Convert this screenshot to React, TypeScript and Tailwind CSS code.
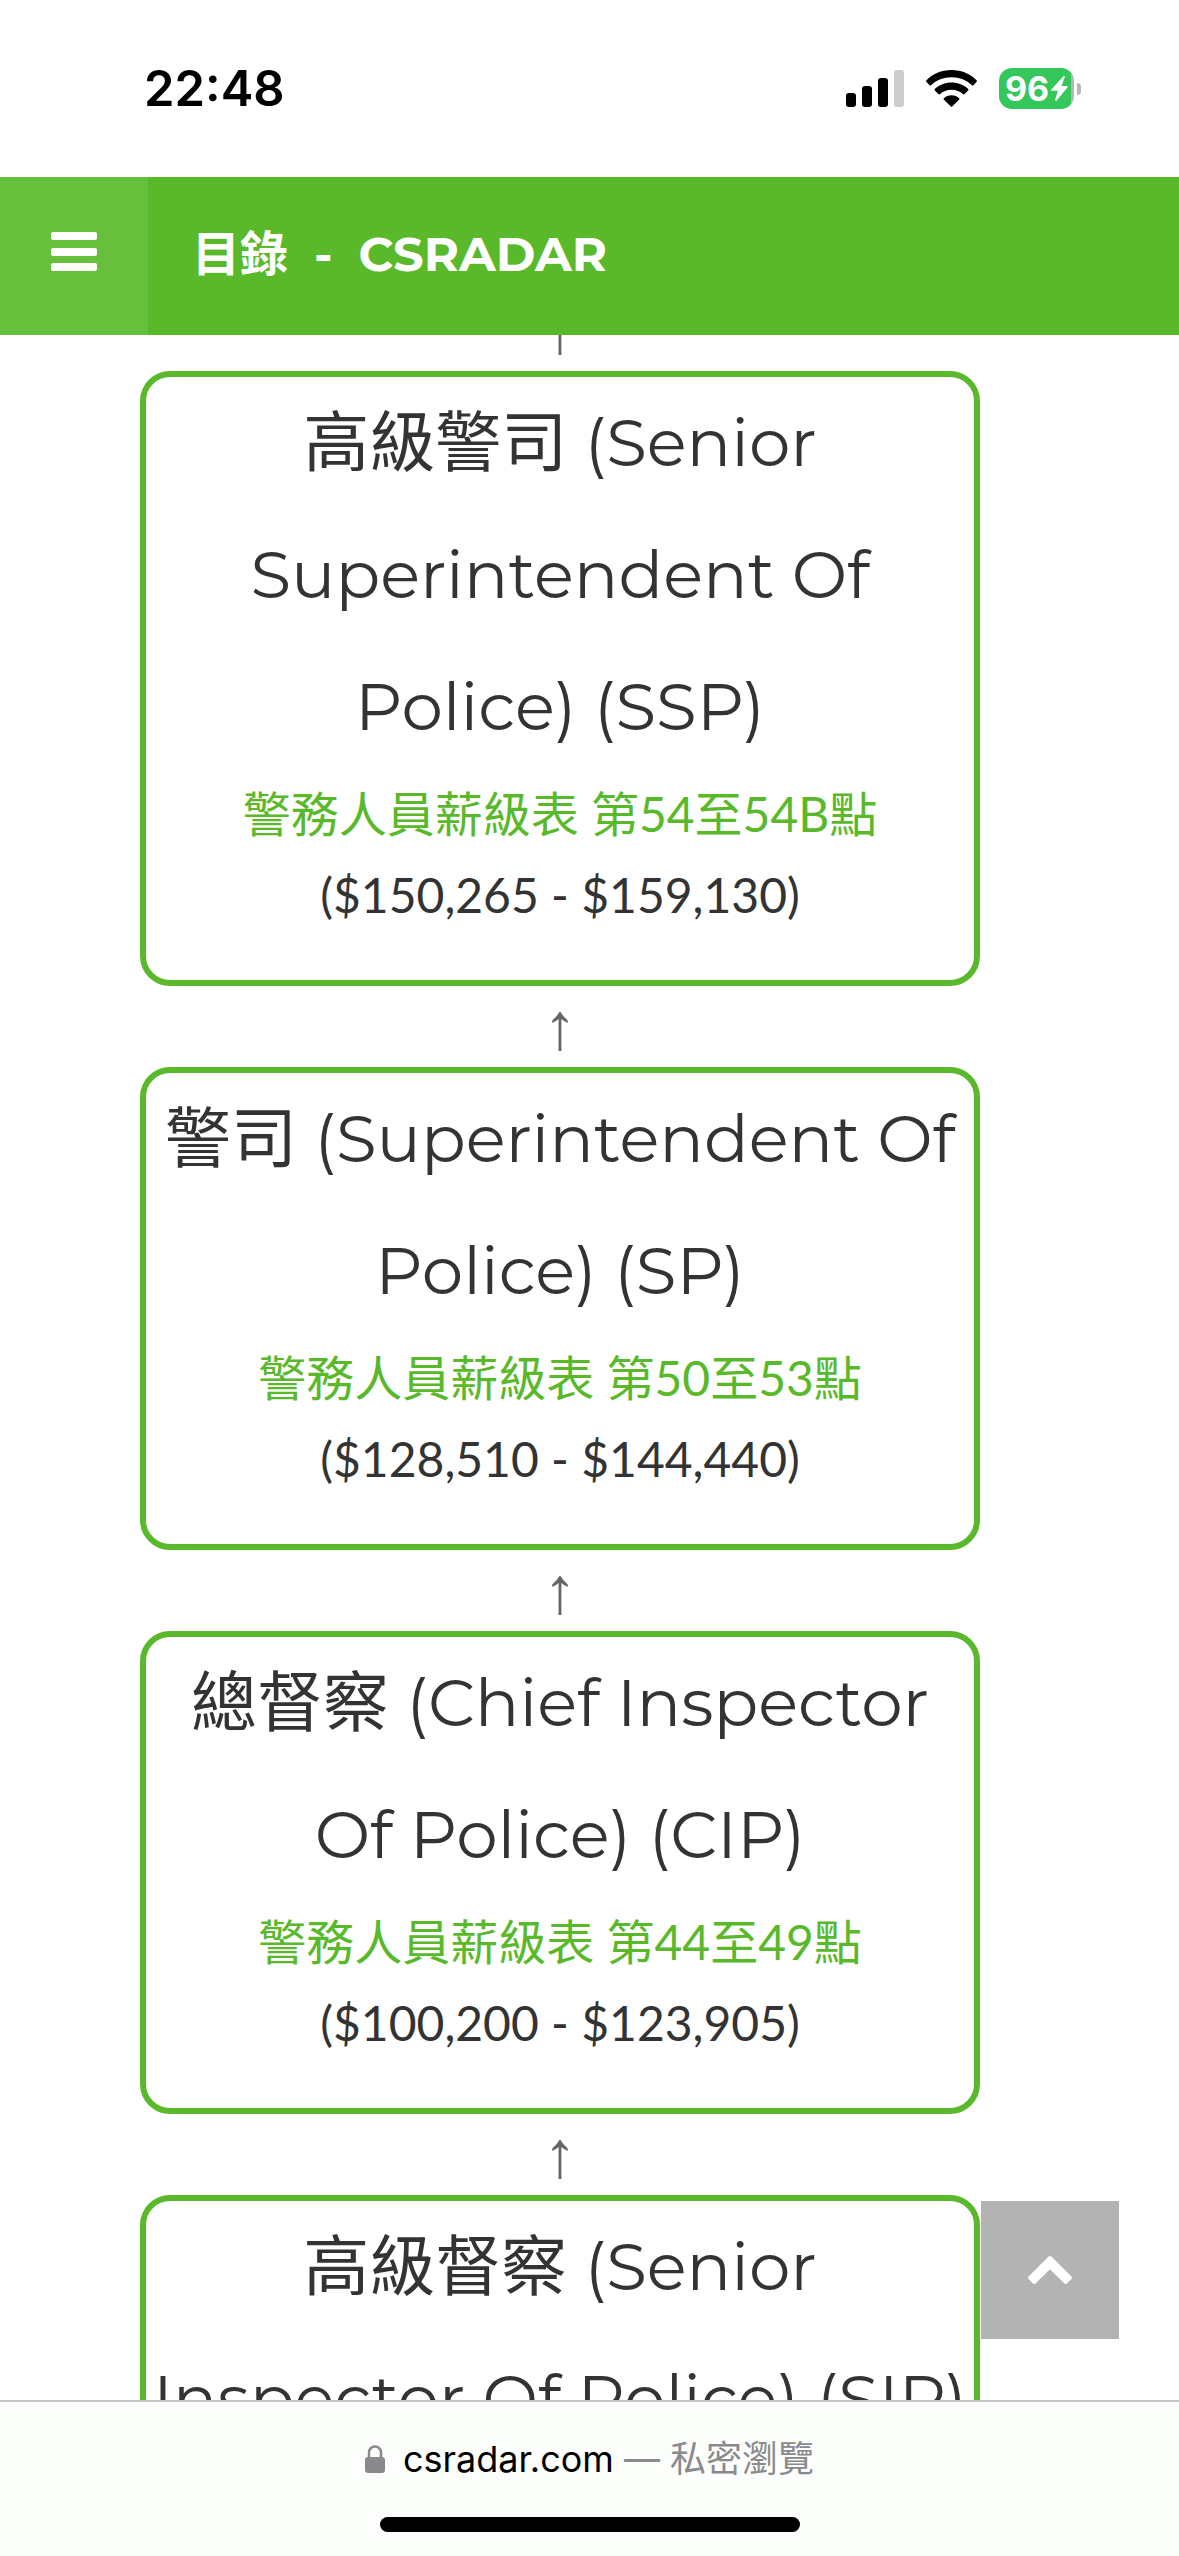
type Rank = {
  zh: string;
  lines: string[];
  points?: string;
  salary?: string;
};

const ranks: Rank[] = [
  {
    zh: "高級警司",
    lines: ["(Senior", "Superintendent Of", "Police) (SSP)"],
    points: "警務人員薪級表 第54至54B點",
    salary: "($150,265 - $159,130)",
  },
  {
    zh: "警司",
    lines: ["(Superintendent Of", "Police) (SP)"],
    points: "警務人員薪級表 第50至53點",
    salary: "($128,510 - $144,440)",
  },
  {
    zh: "總督察",
    lines: ["(Chief Inspector", "Of Police) (CIP)"],
    points: "警務人員薪級表 第44至49點",
    salary: "($100,200 - $123,905)",
  },
  {
    zh: "高級督察",
    lines: ["(Senior", "Inspector Of Police) (SIP)"],
  },
];

function StatusBar() {
  return (
    <div className="flex h-[177px] shrink-0 items-center justify-between pr-[98px] pl-[144px] text-black">
      <span className="text-[49px] font-semibold">22:48</span>
      <div className="flex items-center gap-[22px]">
        <svg className="h-[37px] w-[58px]" viewBox="0 0 58 37">
          <rect x="0" y="23" width="10" height="14" rx="3" />
          <rect x="16" y="16" width="10" height="21" rx="3" />
          <rect x="32" y="8" width="10" height="29" rx="3" />
          <rect x="48" y="0" width="10" height="37" rx="3" fill="#cccccc" />
        </svg>
        <svg className="h-[37px] w-[51px]" viewBox="0 0 51 37">
          <path d="M25.5 0C15.5 0 6.5 4 .3 10.400c-.4.4-.4 1 0 1.400l3.300 3.400c.4.4 1 .4 1.400 0C10.400 9.900 17.600 7.200 25.500 7.200s15.100 2.700 20.500 8c.4.4 1 .4 1.400 0l3.300-3.400c.4-.4.4-1 0-1.400C44.500 4 35.500 0 25.500 0z" />
          <path d="M25.500 12.600c-6.500 0-12.400 2.500-16.700 6.500-.4.4-.4 1 0 1.400l3.600 3.600c.4.4 1 .4 1.400.1 3.100-2.800 7.200-4.500 11.700-4.500s8.600 1.700 11.700 4.500c.4.3 1 .3 1.400-.1l3.600-3.600c.4-.4.4-1 0-1.400-4.300-4-10.200-6.500-16.700-6.500z" />
          <path d="M25.500 25.300c-3 0-5.700 1.100-7.700 2.900-.4.4-.4 1 0 1.400l7 7c.4.4 1 .4 1.400 0l7-7c.4-.4.4-1 0-1.400-2-1.800-4.700-2.900-7.700-2.900z" />
        </svg>
        <div className="flex items-center gap-[3px]">
          <div className="flex h-[41px] w-[75px] items-center justify-center gap-[2px] rounded-[13px] bg-[linear-gradient(90deg,#34c759_96%,#b5b5b5_96%)] text-white">
            <span className="text-[34px] leading-none font-bold">96</span>
            <svg className="h-[25px] w-[17px]" viewBox="0 0 17 25" fill="currentColor">
              <path d="M12.300.3L.4 13.500c-.5.6-.3 1.300.5 1.300h6L4.200 23.600c-.3 1.100.7 1.700 1.500.8L16.600 11.300c.5-.6.3-1.300-.5-1.300h-5.600L13.700 1.200c.4-1-.6-1.700-1.400-.9z" />
            </svg>
          </div>
          <div className="h-3 w-1 rounded-r-full bg-[#b5b5b5]" />
        </div>
      </div>
    </div>
  );
}

function Header() {
  return (
    <header className="flex h-[158px] shrink-0 items-center bg-[#59b92b] text-white">
      <button aria-label="Menu" className="flex h-full w-[148px] items-center justify-center bg-[#66c03b] pb-2">
        <svg className="h-[40px] w-[46px]" viewBox="0 0 46 40" fill="currentColor">
          <rect width="46" height="8" rx="2" />
          <rect y="16" width="46" height="8" rx="2" />
          <rect y="31" width="46" height="8" rx="2" />
        </svg>
      </button>
      <h1 className="ml-11 flex items-center gap-[26px] pb-1 font-[Montserrat,'Noto_Sans_CJK_TC',sans-serif] text-[48px] font-bold">
        <a href="#menu">目錄</a>
        <span>-</span>
        <a href="#home">CSRADAR</a>
      </h1>
    </header>
  );
}

function Arrow() {
  return <div className="text-center font-['Liberation_Serif',serif] text-[66px] leading-[81px] text-[#666666]">↑</div>;
}

function RankCard({ rank }: { rank: Rank }) {
  return (
    <section className="rounded-[30px] border-6 border-[#59b92b] pb-[45px] text-center text-[48px] leading-[81px] text-[#333333]">
      <h2 className="font-[Montserrat,'Noto_Sans_CJK_TC',sans-serif] text-[66px] leading-[132px] whitespace-nowrap">
        {rank.zh} {rank.lines[0]}
        {rank.lines.slice(1).map((line) => (
          <span key={line} className="block">{line}</span>
        ))}
      </h2>
      {rank.points && <a href="#pay" className="block text-[#59b92b]">{rank.points}</a>}
      {rank.salary && <p>{rank.salary}</p>}
    </section>
  );
}

export default function App() {
  return (
    <div className="flex h-screen flex-col overflow-hidden bg-white font-[Inter,'Noto_Sans_CJK_TC',sans-serif]">
      <StatusBar />
      <Header />
      <main className="relative min-h-0 flex-1 overflow-hidden">
        <div className="-mt-[45px] pr-[199px] pl-[140px] font-[Lato,'Noto_Sans_CJK_TC',sans-serif]">
          {ranks.map((rank) => (
            <div key={rank.zh}>
              <Arrow />
              <RankCard rank={rank} />
            </div>
          ))}
        </div>
        <button aria-label="Back to top" className="absolute right-[60px] bottom-[61px] flex size-[138px] items-center justify-center bg-[#b3b3b3] text-white">
          <svg className="h-7 w-11" viewBox="0 0 44 28" fill="currentColor">
            <path d="M20.600.6L.6 20.400c-.8.8-.8 1.700 0 2.500l4.500 4.500c.8.8 1.700.8 2.500 0L22 13.200l14.400 14.200c.8.8 1.700.8 2.500 0l4.500-4.500c.8-.8.8-1.700 0-2.500L23.400.6c-.8-.8-2-.8-2.800 0z" />
          </svg>
        </button>
      </main>
      <footer className="flex h-[156px] shrink-0 flex-col items-center justify-between border-t-2 border-[#c4c4c6] bg-[#fcfefb] pt-[30px] pb-6">
        <div className="flex items-center gap-[18px] text-[36px] leading-[54px]">
          <svg className="h-7 w-5" viewBox="0 0 20 28" fill="#8a8a8e">
            <rect y="12" width="20" height="16" rx="3" />
            <path d="M4 13V7.500a6 6 0 0 1 12 0V13" fill="none" stroke="#8a8a8e" strokeWidth="2.500" />
          </svg>
          <p className="text-[#8a8a8e]">
            <a href="https://csradar.com" className="text-black">csradar.com</a> — 私密瀏覽
          </p>
        </div>
        <div className="h-[15px] w-[420px] rounded-full bg-black" />
      </footer>
    </div>
  );
}
